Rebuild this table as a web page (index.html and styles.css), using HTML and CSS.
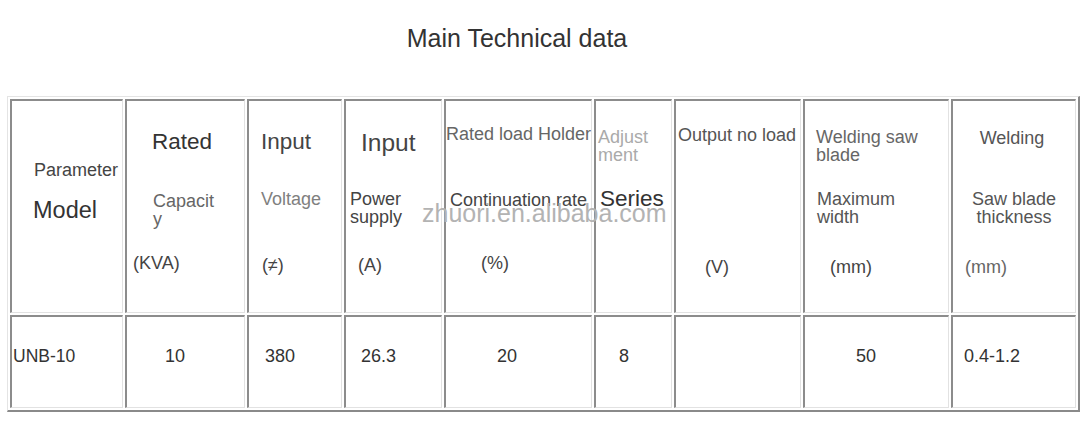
FILE: index.html
```html
<!DOCTYPE html>
<html>
<head>
<meta charset="utf-8">
<link rel="stylesheet" href="styles.css">
</head>
<body>
<div class="page">
  <h1 class="title">Main Technical data</h1>
  <div class="sheet">
    <table class="spec">
      <colgroup>
        <col class="c1"><col class="c2"><col class="c3"><col class="c4"><col class="c5"><col class="c6"><col class="c7"><col class="c8"><col class="c9">
      </colgroup>
      <tr class="head">
        <td>
          <div class="first">
            <div class="param">Parameter</div>
            <div class="model">Model</div>
          </div>
        </td>
        <td>
          <div class="t"><div class="big dark p-rated">Rated</div></div>
          <div class="m"><div class="sm gray p-cap">Capacit<br>y</div></div>
          <div class="b"><div class="sm dim p-kva">(KVA)</div></div>
        </td>
        <td>
          <div class="t"><div class="big dim p-in1">Input</div></div>
          <div class="m"><div class="sm light p-volt">Voltage</div></div>
          <div class="b"><div class="sm dim p-ne">(≠)</div></div>
        </td>
        <td>
          <div class="t"><div class="huge dim p-in2">Input</div></div>
          <div class="m"><div class="sm dim p-pow">Power<br>supply</div></div>
          <div class="b"><div class="sm dim p-a">(A)</div></div>
        </td>
        <td>
          <div class="t"><div class="sm gray nowrap p-rlh">Rated load Holder</div></div>
          <div class="m"><div class="sm dim nowrap p-cont">Continuation rate</div></div>
          <div class="b"><div class="sm dim p-pct">(%)</div></div>
        </td>
        <td>
          <div class="t"><div class="sm faint p-adj">Adjust<br>ment</div></div>
          <div class="m"><div class="big dark p-ser">Series</div></div>
          <div class="b"></div>
        </td>
        <td>
          <div class="t"><div class="sm mid nowrap p-out">Output no load</div></div>
          <div class="m"></div>
          <div class="b"><div class="sm dim p-v">(V)</div></div>
        </td>
        <td>
          <div class="t"><div class="sm gray p-wsb">Welding saw<br>blade</div></div>
          <div class="m"><div class="sm mid p-max">Maximum<br>width</div></div>
          <div class="b"><div class="sm dim p-mm1">(mm)</div></div>
        </td>
        <td>
          <div class="t"><div class="sm mid center p-weld">Welding</div></div>
          <div class="m"><div class="sm mid center p-saw">Saw blade<br>thickness</div></div>
          <div class="b"><div class="sm gray p-mm2">(mm)</div></div>
        </td>
      </tr>
      <tr class="data">
        <td><span class="v d1">UNB-10</span></td>
        <td><span class="v d2">10</span></td>
        <td><span class="v d3">380</span></td>
        <td><span class="v d4">26.3</span></td>
        <td><span class="v d5">20</span></td>
        <td><span class="v d6">8</span></td>
        <td></td>
        <td><span class="v d8">50</span></td>
        <td><span class="v d9">0.4-1.2</span></td>
      </tr>
    </table>
    <div class="watermark">zhuori.en.alibaba.com</div>
  </div>
</div>
</body>
</html>
```

FILE: styles.css
```css
html, body {
  margin: 0;
  padding: 0;
  background: #ffffff;
}

body {
  font-family: "Liberation Sans", Arial, sans-serif;
  color: #333;
}

.page {
  width: 1086px;
  padding-top: 23px;
}

.title {
  margin: 0;
  height: 30px;
  font-size: 25px;
  line-height: 30px;
  font-weight: normal;
  color: #333;
  text-align: center;
  padding-right: 52px;
}

.sheet {
  position: relative;
  margin-top: 43px;
  margin-left: 7px;
}

.spec {
  table-layout: fixed;
  width: 1072px;
  border-collapse: separate;
  border-spacing: 2px;
  border-style: solid;
  border-width: 1px 2px 2px 1px;
  border-color: #e4e4e4 #8a8a8a #8a8a8a #e4e4e4;
}

.c1 { width: 113px; }
.c2 { width: 120px; }
.c3 { width: 95px; }
.c4 { width: 98px; }
.c5 { width: 148px; }
.c6 { width: 78px; }
.c7 { width: 127px; }
.c8 { width: 146px; }
.c9 { width: 125px; }

.spec td {
  box-sizing: border-box;
  padding: 0;
  vertical-align: top;
  border-style: solid;
  border-width: 2px 1px 1px 2px;
  border-color: #8c8c8c #e2e2e2 #e2e2e2 #8c8c8c;
  overflow: visible;
}

.head td {
  height: 214px;
}

.data td {
  height: 93px;
}

.t { height: 89px; }
.m { height: 64px; }
.b { height: 40px; }

.sm {
  font-size: 18px;
  line-height: 18px;
}

.big {
  font-size: 22.5px;
  line-height: 24px;
}

.huge {
  font-size: 24.5px;
  line-height: 26px;
}

.nowrap { white-space: nowrap; }
.center { text-align: center; }

.dark { color: #333; }
.dim { color: #444; }
.mid { color: #555; }
.gray { color: #666; }
.light { color: #808080; }
.faint { color: #aaa; }

.first {
  padding-top: 60px;
}

.param {
  font-size: 18px;
  line-height: 18px;
  color: #444;
  padding-left: 22px;
}

.model {
  margin-top: 17px;
  font-size: 23.5px;
  line-height: 28px;
  color: #333;
  padding-left: 21px;
}

/* column 2 */
.p-rated { padding: 29px 0 0 25px; }
.p-cap { padding: 2px 0 0 26px; }
.p-kva { padding: 0 0 0 6px; }

/* column 3 */
.p-in1 { padding: 29px 0 0 12px; }
.p-volt { padding: 0 0 0 12px; }
.p-ne { padding: 2px 0 0 13px; }

/* column 4 */
.p-in2 { padding: 29px 0 0 15px; }
.p-pow { padding: 0 0 0 4px; }
.p-a { padding: 2px 0 0 12px; }

/* column 5 */
.p-rlh { padding: 24px 0 0 0; }
.p-cont { padding: 1px 0 0 4px; }
.p-pct { padding: 0 0 0 35px; }

/* column 6 */
.p-adj { padding: 27px 0 0 2px; }
.p-ser { margin-top: -3px; padding-left: 4px; }

/* column 7 */
.p-out { padding: 25px 0 0 2px; }
.p-v { padding: 4px 0 0 29px; }

/* column 8 */
.p-wsb { padding: 27px 0 0 11px; }
.p-max { padding: 0 0 0 12px; }
.p-mm1 { padding: 4px 0 0 25px; }

/* column 9 */
.p-weld { padding: 28px 4px 0 0; }
.p-saw { padding: 0 0 0 0; }
.p-mm2 { padding: 4px 0 0 12px; }

/* data row */
.v {
  display: block;
  padding-top: 30px;
  font-size: 18px;
  line-height: 18px;
  color: #333;
}

.d1 { padding-left: 1px; font-size: 17.5px; }
.d2 { padding-left: 38px; }
.d3 { padding-left: 16px; }
.d4 { padding-left: 15px; }
.d5 { padding-left: 51px; }
.d6 { padding-left: 23px; }
.d8 { padding-left: 51px; }
.d9 { padding-left: 11px; }

.watermark {
  position: absolute;
  left: 415px;
  top: 102px;
  font-size: 25px;
  line-height: 30px;
  color: #b3b3b3;
  white-space: nowrap;
  pointer-events: none;
}
```
